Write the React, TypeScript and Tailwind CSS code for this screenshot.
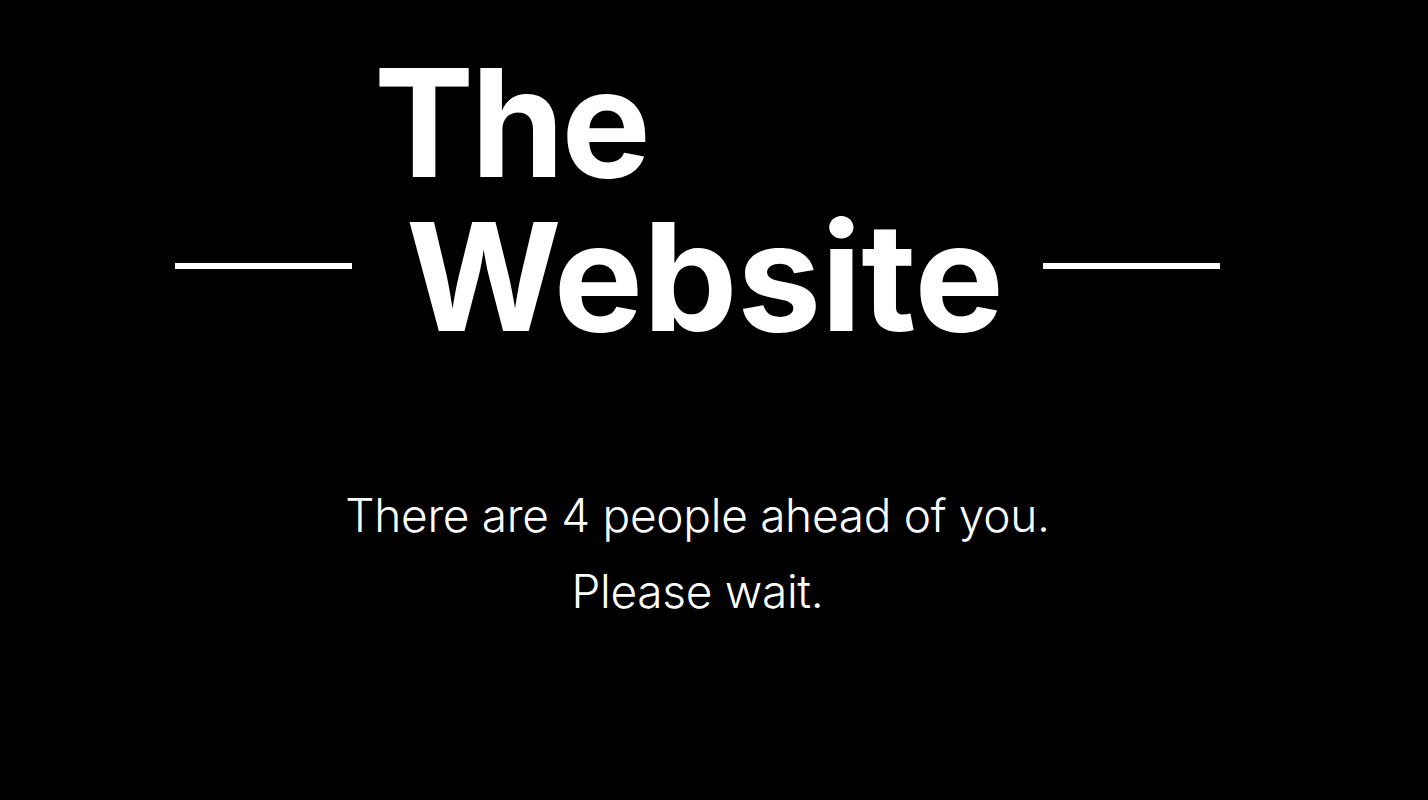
export default function App() {
  return (
    <div className="min-h-[800px] w-full bg-black text-white flex flex-col items-center pr-[33px]" style={{ fontFamily: "Inter, 'Noto Sans', sans-serif" }}>
      <div className="w-[1045px] flex flex-col mt-[46px]">
        <div className="ml-[199px] text-[150px] font-bold leading-[154px] tracking-[-3px]">The</div>
        <div className="flex items-start">
          <div className="mt-[63px] w-[177px] h-[6px] bg-white" />
          <div className="ml-[54px] text-[150px] font-bold leading-[154px] tracking-[-0.3px]">Website</div>
          <div className="ml-auto mt-[63px] w-[177px] h-[6px] bg-white" />
        </div>
      </div>
      <div className="mt-[123px] flex flex-col items-center text-[46px] font-light leading-[76px] tracking-[-0.3px]">
        <div>There are 4 people ahead of you.</div>
        <div>Please wait.</div>
      </div>
    </div>
  );
}
